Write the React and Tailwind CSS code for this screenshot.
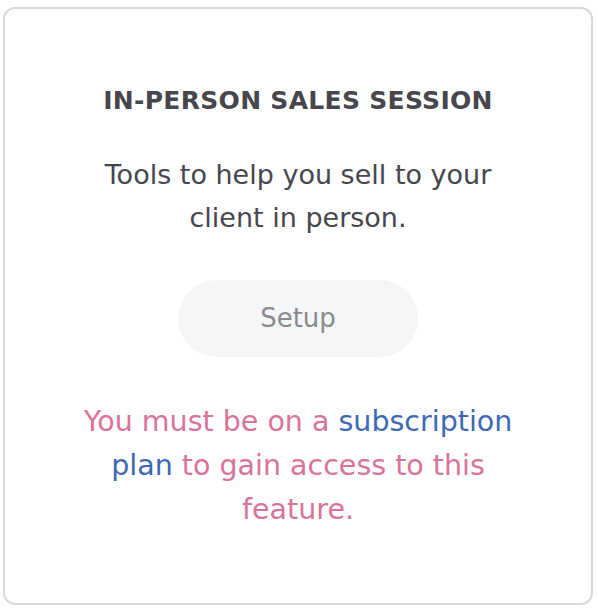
import React from 'react';

const App = () => {
  return (
    <div className="w-[598px] h-[612px] bg-white pl-[3px] pr-[5px] pt-[7px] pb-[7px]" style={{ fontFamily: '"DejaVu Sans", sans-serif' }}>
      <div className="h-full rounded-[12px] border-2 border-[#d9d9d9] flex flex-col items-center pt-[76px] text-center">
        <h2 className="text-[25px] leading-[32px] font-semibold text-[#46464c] tracking-[0.3px]">
          IN-PERSON SALES SESSION
        </h2>

        <p className="mt-[36px] text-[27px] leading-[43px] text-[#46464c] w-[420px]">
          Tools to help you sell to your client in person.
        </p>

        <button className="mt-[41px] w-[240px] h-[77px] rounded-full bg-[#f4f5f7] text-[26px] text-[#8a8a8e]">
          Setup
        </button>

        <p className="mt-[43px] w-[460px] text-[28.5px] leading-[44px] font-medium text-[#d9739a]">
          You must be on a <span className="text-[#3d68b5]">subscription plan</span> to gain access to this feature.
        </p>
      </div>
    </div>
  );
};

export default App;
